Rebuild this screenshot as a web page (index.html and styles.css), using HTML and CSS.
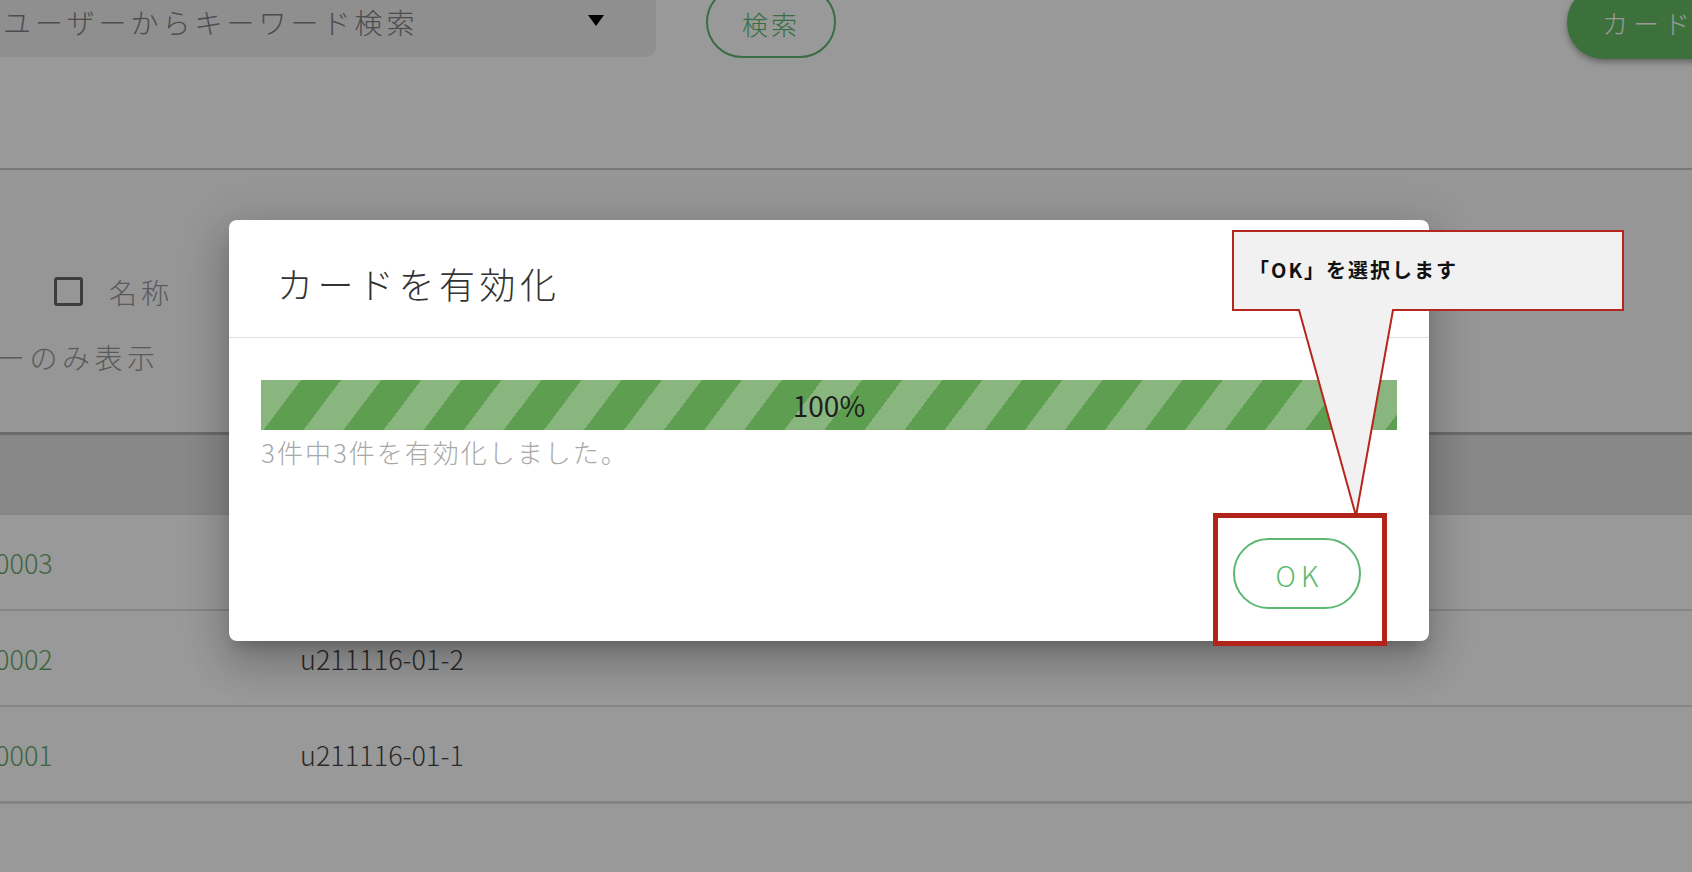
FILE: index.html
```html
<!DOCTYPE html>
<html lang="ja">
<head>
    <meta charset="UTF-8">
    <meta name="viewport" content="width=device-width, initial-scale=1.0">
    <title>カードを有効化</title>
    <link rel="stylesheet" href="styles.css">
</head>
<body>
    <div class="page">
        <!-- Toolbar -->
        <div class="header">
            <div class="toolbar">
                <div class="search-select">
                    <span class="select-text">ユーザーからキーワード検索</span>
                    <span class="caret"></span>
                </div>
                <button class="btn btn-outline">検索</button>
                <button class="btn btn-fill">カード</button>
            </div>
        </div>

        <!-- Filters -->
        <div class="filters">
            <div class="filter-row">
                <span class="checkbox"></span>
                <span class="filter-label">名称</span>
            </div>
            <div class="filter-row filter-only">ーのみ表示</div>
        </div>

        <!-- List -->
        <div class="list">
            <div class="list-head"></div>
            <div class="list-row">
                <span class="cell-id">0003</span>
                <span class="cell-name"></span>
            </div>
            <div class="list-row">
                <span class="cell-id">0002</span>
                <span class="cell-name">u211116-01-2</span>
            </div>
            <div class="list-row last">
                <span class="cell-id">0001</span>
                <span class="cell-name">u211116-01-1</span>
            </div>
        </div>
    </div>

    <div class="backdrop"></div>

    <!-- Dialog -->
    <div class="dialog">
        <div class="dialog-title">カードを有効化</div>
        <div class="dialog-body">
            <div class="progress-bar">
                <span class="progress-label">100%</span>
            </div>
            <div class="progress-message">3件中3件を有効化しました。</div>
        </div>
        <div class="dialog-actions">
            <button class="btn-ok">OK</button>
        </div>
    </div>

    <!-- Annotation -->
    <div class="callout">
        <svg class="callout-shape" width="393" height="290" viewBox="0 0 393 290">
            <polygon points="1,1 391,1 391,80 161,80 124,286 67,80 1,80"
                     fill="#f1f1f1" stroke="#b5261c" stroke-width="2" stroke-linejoin="miter"/>
        </svg>
        <div class="callout-text">「OK」を選択します</div>
    </div>
    <div class="focus-box"></div>
</body>
</html>
```

FILE: styles.css
```css
body {
    margin: 0;
    width: 1692px;
    height: 872px;
    overflow: hidden;
    background: #ffffff;
    font-family: "Noto Sans CJK JP", "Noto Sans", sans-serif;
    font-weight: 300;
    position: relative;
}

.page {
    width: 100%;
}

/* toolbar */
.header {
    height: 168px;
    background: #ffffff;
    border-bottom: 2px solid #c8c8c8;
    box-shadow: 0 3px 4px rgba(0,0,0,0.12);
    overflow: hidden;
}

.toolbar {
    display: flex;
    align-items: flex-start;
    margin-top: -14px;
}

.search-select {
    display: flex;
    align-items: center;
    width: 676px;
    height: 71px;
    margin-left: -20px;
    padding: 1px 52px 0 23px;
    box-sizing: border-box;
    background: #eeeeee;
    border-radius: 10px;
}

.select-text {
    font-size: 28px;
    letter-spacing: 4px;
    color: #808080;
    white-space: nowrap;
}

.caret {
    margin-left: auto;
    margin-bottom: 3px;
    width: 0;
    height: 0;
    border-left: 8px solid transparent;
    border-right: 8px solid transparent;
    border-top: 11px solid #000000;
}

.btn {
    font-family: inherit;
    font-weight: 300;
    font-size: 26px;
    height: 72px;
    padding: 2px 0 0;
    box-sizing: border-box;
    border-radius: 36px;
    cursor: pointer;
}

.btn-outline {
    margin-left: 50px;
    width: 130px;
    background: #ffffff;
    border: 2px solid #5cb870;
    color: #5cb870;
    letter-spacing: 3px;
}

.btn-fill {
    margin-left: auto;
    margin-right: -60px;
    width: 185px;
    height: 73px;
    text-align: left;
    padding: 0 0 0 35px;
    background: #66bd63;
    border: none;
    color: #ffffff;
    font-size: 26px;
    letter-spacing: 5px;
    box-shadow: 0 3px 6px rgba(0,0,0,0.35);
}

/* filters */
.filters {
    height: 262px;
    padding-top: 101px;
    box-sizing: border-box;
    background: #fafafa;
}

.filter-row {
    display: flex;
    align-items: center;
    height: 40px;
    font-size: 28px;
    letter-spacing: 4px;
    color: #979797;
}

.checkbox {
    width: 29px;
    height: 29px;
    margin-left: 54px;
    margin-right: 26px;
    border: 3px solid #666666;
    border-radius: 3px;
    box-sizing: border-box;
}

.filter-label {
    margin-top: 2px;
}

.filter-only {
    margin-top: 26px;
    margin-left: -3px;
    letter-spacing: 4.5px;
}

/* list */
.list {
    border-top: 3px solid #b2b2b2;
}

.list-head {
    height: 78px;
    background: #e3e3e3;
}

.list-row {
    display: flex;
    align-items: center;
    height: 94px;
    border-top: 2px solid #dedede;
    background: #ffffff;
    font-size: 27px;
}

.list-row.last {
    border-bottom: 3px solid #dcdcdc;
}

.cell-id {
    width: 305px;
    margin-left: -5px;
    color: #6aa96a;
}

.cell-name {
    color: #464646;
}

.backdrop {
    position: absolute;
    inset: 0;
    background: rgba(0,0,0,0.4);
}

/* dialog */
.dialog {
    position: absolute;
    left: 229px;
    top: 220px;
    width: 1200px;
    height: 421px;
    background: #ffffff;
    border-radius: 8px;
    display: flex;
    flex-direction: column;
    box-shadow: 0 11px 15px -7px rgba(0,0,0,0.2),
                0 24px 38px 3px rgba(0,0,0,0.14),
                0 9px 46px 8px rgba(0,0,0,0.12);
}

.dialog-title {
    padding: 43px 50px 34px 48px;
    font-size: 36px;
    line-height: 40px;
    letter-spacing: 4.5px;
    color: #333333;
    border-bottom: 1px solid #e0e0e0;
}

.dialog-body {
    padding: 42px 32px 0;
}

.progress-bar {
    height: 50px;
    display: flex;
    align-items: center;
    justify-content: center;
    background: repeating-linear-gradient(127deg, #88b67e 0 32px, #5e9e50 32px 64px);
}

.progress-label {
    font-size: 28px;
    font-weight: 400;
    color: #1e1e1e;
}

.progress-message {
    margin-top: 7px;
    font-size: 26px;
    line-height: 30px;
    letter-spacing: 2px;
    color: #a8a8a8;
}

.dialog-actions {
    margin-top: auto;
    display: flex;
    justify-content: flex-end;
    padding: 0 68px 32px;
}

.btn-ok {
    width: 128px;
    height: 71px;
    border: 2px solid #5cb870;
    border-radius: 36px;
    background: #ffffff;
    color: #5cb870;
    font-family: inherit;
    font-weight: 300;
    font-size: 28px;
    letter-spacing: 5px;
    padding: 3px 0 0 5px;
}

/* annotation */
.callout {
    position: absolute;
    left: 1232px;
    top: 230px;
    width: 393px;
    height: 290px;
}

.callout-shape {
    position: absolute;
    left: 0;
    top: 0;
}

.callout-text {
    position: relative;
    height: 78px;
    display: flex;
    align-items: center;
    padding-left: 17px;
    font-size: 20px;
    font-weight: 700;
    letter-spacing: 2px;
    color: #111111;
}

.focus-box {
    position: absolute;
    left: 1213px;
    top: 513px;
    width: 174px;
    height: 133px;
    border: 5px solid #b2241a;
    box-sizing: border-box;
}
```
